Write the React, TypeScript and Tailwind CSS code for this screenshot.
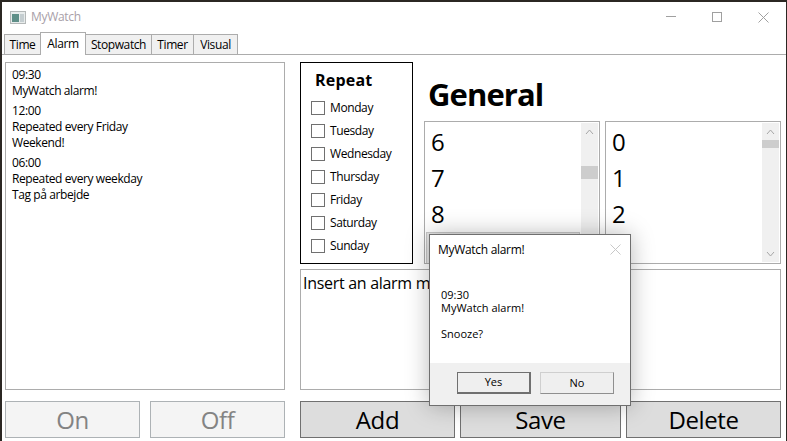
import React from 'react';

const DAYS = ['Monday', 'Tuesday', 'Wednesday', 'Thursday', 'Friday', 'Saturday', 'Sunday'];
const TABS = [
  { label: 'Time', width: 'w-[37px]' },
  { label: 'Alarm', width: 'w-[46px]' },
  { label: 'Stopwatch', width: 'w-[67px]' },
  { label: 'Timer', width: 'w-[43px]' },
  { label: 'Visual', width: 'w-[45px]' },
];

function NumberList({ numbers, thumbClass, selected }: { numbers: string[]; thumbClass: string; selected?: boolean }) {
  return (
    <div className="flex-1 h-[143px] border border-[#acacac] flex overflow-hidden">
      <div className="flex-1 min-w-0 pt-[2px] pl-[1px]">
        {numbers.map((n) => (
          <div key={n} className="h-[36px] pl-[5px] text-[24px] leading-[36px] text-black">{n}</div>
        ))}
        {selected && <div className="h-[36px] mr-[1px] border border-[#c8c8c8] bg-[#e6e6e6]" />}
      </div>
      <div className="w-[17px] bg-[#f0f0f0] mr-[1px] my-[1px] flex flex-col items-center relative">
        <svg className="mt-[6px]" width="9" height="6" viewBox="0 0 9 6" fill="none" stroke="#a6a6a6" strokeWidth="1"><path d="M1 5l3.5-4L8 5" /></svg>
        <div className={`absolute left-0 w-full bg-[#cdcdcd] ${thumbClass}`} />
        <svg className="mt-auto mb-[5px]" width="9" height="6" viewBox="0 0 9 6" fill="none" stroke="#a6a6a6" strokeWidth="1"><path d="M1 1l3.5 4L8 1" /></svg>
      </div>
    </div>
  );
}

function BigButton({ label, disabled, className }: { label: string; disabled?: boolean; className: string }) {
  return (
    <div className={`h-[37px] flex items-center justify-center text-[24px] leading-none border ${disabled ? 'bg-[#f4f4f4] border-[#adb2b5] text-[#838383]' : 'bg-[#dddddd] border-[#707070] text-black'} ${className}`}>
      {label}
    </div>
  );
}

export default function App() {
  return (
    <div className="w-[787px] h-[441px] relative overflow-hidden bg-[#2b2723] pt-[2px] pl-[2px] pr-[1px] text-black [font-family:'Open_Sans','Noto_Sans',sans-serif] tracking-[-0.4px]">
      <div className="h-[439px] bg-white flex flex-col">
        {/* Title bar */}
        <div className="h-[30px] flex items-center shrink-0">
          <svg className="ml-[8px]" width="16" height="13" viewBox="0 0 16 13">
            <rect x="0.5" y="0.5" width="15" height="12" fill="#e8ecec" stroke="#b4b8b8" />
            <rect x="2" y="3" width="7" height="8" fill="#5f8f88" />
            <rect x="10" y="3" width="4" height="8" fill="#c4cdd0" />
          </svg>
          <span className="ml-[5px] text-[12px] text-[#a8a0a8] tracking-[-0.3px]">MyWatch</span>
          <div className="ml-auto flex items-center text-[#999999]">
            <svg width="11" height="2" viewBox="0 0 11 2"><path d="M0 .5h10" stroke="#a0a0a0" /></svg>
            <svg className="ml-[35px]" width="10" height="10" viewBox="0 0 10 10"><rect x=".5" y=".5" width="9" height="9" fill="none" stroke="#a0a0a0" /></svg>
            <svg className="ml-[36px] mr-[17px]" width="11" height="11" viewBox="0 0 11 11"><path d="M.5.5l10 10M10.5.5l-10 10" stroke="#a0a0a0" fill="none" /></svg>
          </div>
        </div>

        {/* Tabs */}
        <div className="h-[23px] shrink-0 flex items-end pl-[2px] border-b border-[#acacac] text-[12px] leading-none">
          {TABS.map((tab) =>
            tab.label === 'Alarm' ? (
              <div key={tab.label} className={`h-[23px] -mb-[1px] -ml-[1px] pb-[1px] flex items-center justify-center bg-white border border-b-0 border-[#acacac] relative z-10 ${tab.width}`}>{tab.label}</div>
            ) : (
              <div key={tab.label} className={`h-[20px] pt-[1px] -ml-[1px] first:ml-0 flex items-center justify-center bg-[#f0f0f0] border border-b-0 border-[#acacac] ${tab.width}`}>{tab.label}</div>
            )
          )}
        </div>

        {/* Main content */}
        <div className="flex-1 min-h-0 flex gap-[15px] pl-[3px] pr-[5px] pt-[7px]">
          <div className="w-[280px] shrink-0 flex flex-col">
            <div className="h-[328px] border border-[#acacac] pl-[6px] pt-[4px] text-[12px] leading-[16px]">
              <div>09:30</div>
              <div>MyWatch alarm!</div>
              <div className="mt-[4px]">12:00</div>
              <div>Repeated every Friday</div>
              <div>Weekend!</div>
              <div className="mt-[4px]">06:00</div>
              <div>Repeated every weekday</div>
              <div>Tag på arbejde</div>
            </div>
            <div className="flex gap-[10px] mt-[11px]">
              <BigButton label="On" disabled className="w-[135px]" />
              <BigButton label="Off" disabled className="w-[135px]" />
            </div>
          </div>

          <div className="flex-1 min-w-0 flex flex-col">
            <div className="flex gap-[11px]">
              <div className="w-[113px] h-[202px] shrink-0 border border-black px-[10px]">
                <div className="text-[16px] font-bold leading-[22px] mt-[6px] pl-[4px] tracking-[0.2px]">Repeat</div>
                <div className="mt-[5px]">
                  {DAYS.map((day) => (
                    <div key={day} className="h-[23px] flex items-center gap-[5px] text-[12px]">
                      <div className="w-[14px] h-[14px] border border-[#707070] bg-white shrink-0" />
                      {day}
                    </div>
                  ))}
                </div>
              </div>

              <div className="flex-1 min-w-0 flex flex-col">
                <div className="h-[59px] pl-[4px] pt-[12px] text-[31px] leading-[40px] font-bold tracking-[-0.9px]">General</div>
                <div className="flex gap-[5px]">
                  <NumberList numbers={['6', '7', '8']} thumbClass="top-[43px] h-[13px]" selected />
                  <NumberList numbers={['0', '1', '2']} thumbClass="top-[17px] h-[8px]" />
                </div>
              </div>
            </div>

            <div className="mt-[5px] h-[121px] border border-[#acacac] px-[2px] pt-[1px] text-[16px] leading-[24px] tracking-[-0.3px]">Insert an alarm message</div>

            <div className="flex gap-[5px] mt-[11px]">
              <BigButton label="Add" className="w-[155px]" />
              <BigButton label="Save" className="w-[161px]" />
              <BigButton label="Delete" className="w-[155px]" />
            </div>
          </div>
        </div>
      </div>

      {/* Alarm dialog */}
      <div className="absolute left-[429px] top-[234px] w-[202px] h-[172px] bg-white border border-[#6f6f6f] flex flex-col shadow-[0_0_22px_rgba(0,0,0,0.28)] tracking-normal">
        <div className="h-[29px] flex items-center pl-[8px] pr-[9px] text-[12px] tracking-[-0.3px] shrink-0">
          <span>MyWatch alarm!</span>
          <svg className="ml-auto" width="11" height="11" viewBox="0 0 11 11"><path d="M.5.5l10 10M10.5.5l-10 10" stroke="#c8c8c8" fill="none" /></svg>
        </div>
        <div className="flex-1 pl-[11px] pt-[24px] text-[11px] leading-[13px]">
          <div>09:30</div>
          <div>MyWatch alarm!</div>
          <div className="mt-[13px]">Snooze?</div>
        </div>
        <div className="h-[42px] bg-[#f0f0f0] flex gap-[9px] pl-[27px] pt-[9px] text-[11px] shrink-0">
          <div className="w-[74px] h-[22px] flex items-center justify-center bg-[#efefef] border border-[#707070] border-b-2 border-r-2">Yes</div>
          <div className="w-[74px] h-[22px] flex items-center justify-center bg-[#efefef] border border-[#cfcfcf] border-b-[#8f8f8f] border-r-[#8f8f8f]">No</div>
        </div>
      </div>
    </div>
  );
}
